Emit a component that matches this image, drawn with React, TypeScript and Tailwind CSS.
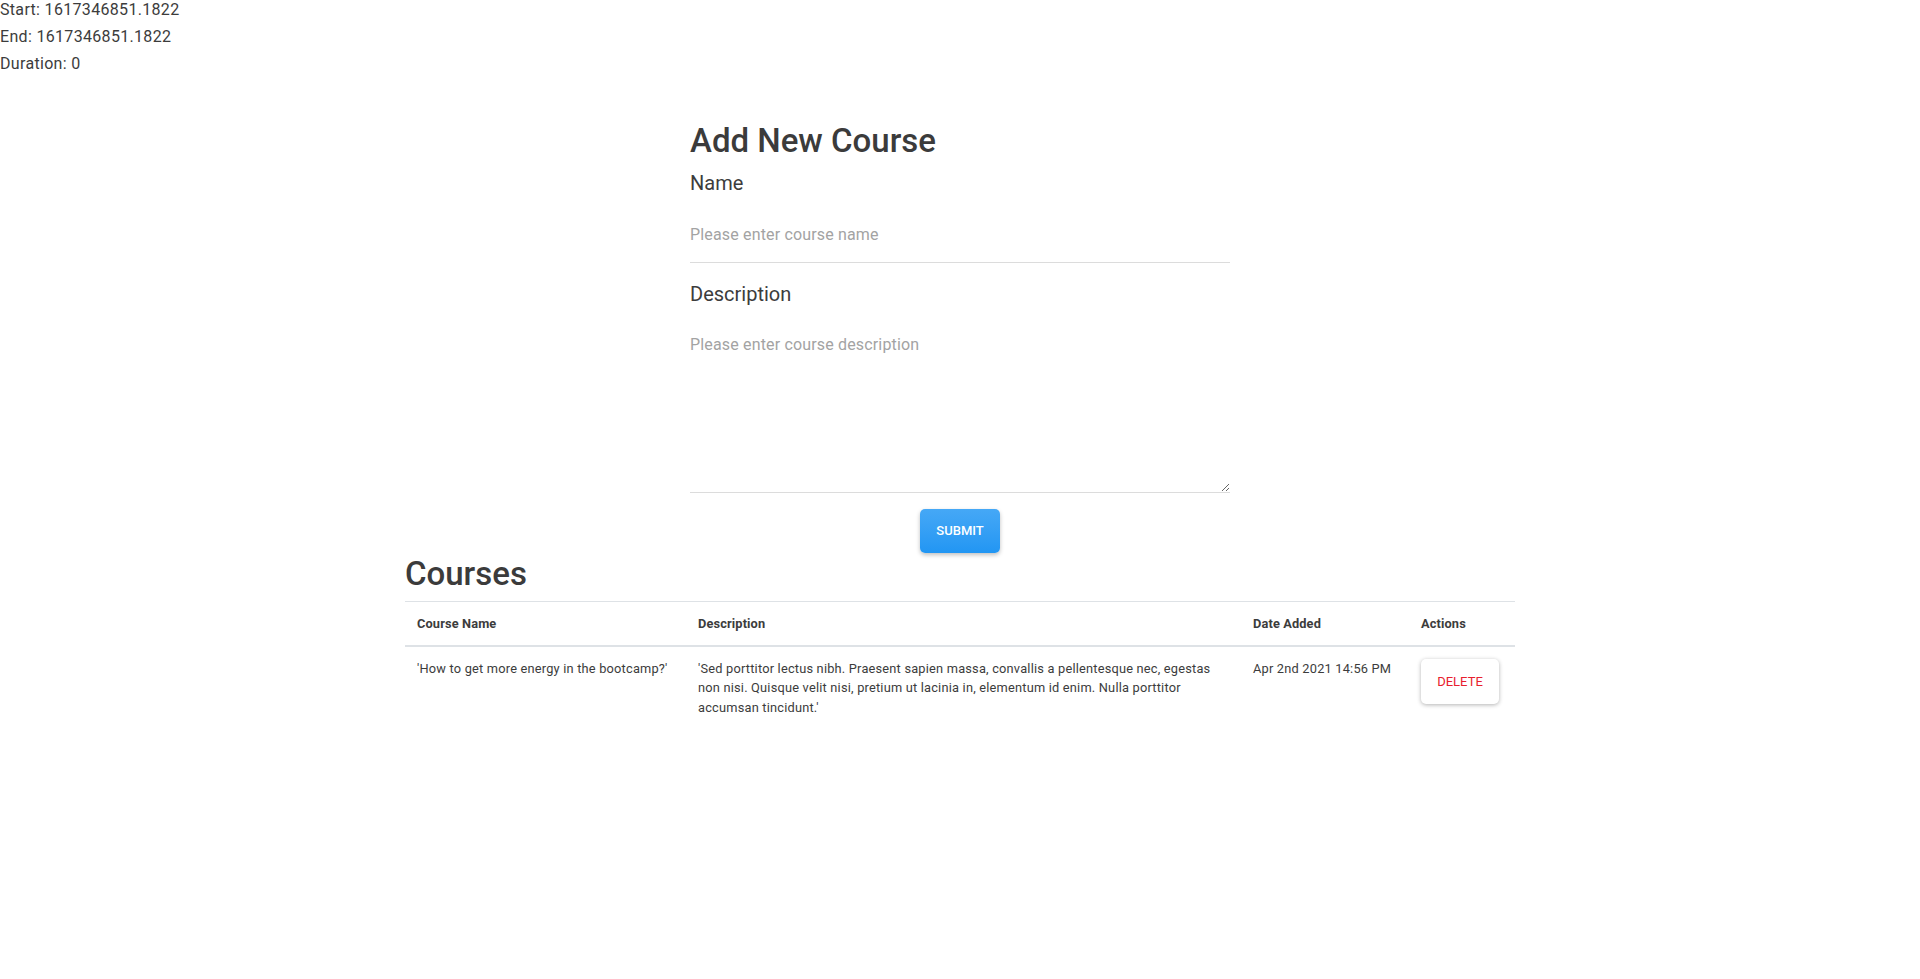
import React, { useState } from "react";

interface Course {
  name: string;
  description: string;
  dateAdded: string;
}

const initialCourses: Course[] = [
  {
    name: "'How to get more energy in the bootcamp?'",
    description:
      "'Sed porttitor lectus nibh. Praesent sapien massa, convallis a pellentesque nec, egestas non nisi. Quisque velit nisi, pretium ut lacinia in, elementum id enim. Nulla porttitor accumsan tincidunt.'",
    dateAdded: "Apr 2nd 2021 14:56 PM",
  },
];

export default function App() {
  const [name, setName] = useState("");
  const [description, setDescription] = useState("");
  const [courses, setCourses] = useState<Course[]>(initialCourses);

  return (
    <div className="min-h-screen bg-white text-[#3c3c3c] font-['Roboto',sans-serif]">
      {/* Timing info */}
      <div className="text-[16px] leading-[19px] tracking-[0.02em]">
        <div className="mb-2">Start: 1617346851.1822</div>
        <div className="mb-2">End: 1617346851.1822</div>
        <div>Duration: 0</div>
      </div>

      {/* Add course form */}
      <div className="mx-auto mt-[48px] w-[540px]">
        <h1 className="text-[33px] leading-[40px] font-medium text-[#3b3b3b]">Add New Course</h1>
        <label className="mt-[10px] block text-[20px] leading-[24px] text-[#3c3c3c]">Name</label>
        <input
          value={name}
          onChange={(e) => setName(e.target.value)}
          placeholder="Please enter course name"
          className="block w-full border-b border-[#dcdcdc] pt-[30px] pb-[18px] text-[16px] leading-[19px] tracking-[0.01em] outline-none placeholder:text-[#a3a3a3]"
        />
        <label className="mt-[19px] block text-[20px] leading-[24px] text-[#3c3c3c]">Description</label>
        <textarea
          value={description}
          onChange={(e) => setDescription(e.target.value)}
          placeholder="Please enter course description"
          className="block h-[187px] w-full border-b border-[#dcdcdc] pt-[29px] text-[16px] leading-[19px] tracking-[0.01em] outline-none placeholder:text-[#a3a3a3]"
        />
        <div className="mt-[16px] flex justify-center">
          <button className="h-[44px] w-[80px] rounded-[5px] bg-gradient-to-b from-[#45a8f6] to-[#2196f3] text-[13px] font-medium text-white uppercase shadow-[0_2px_4px_rgba(0,0,0,0.25)]">
            Submit
          </button>
        </div>
      </div>

      {/* Courses table */}
      <div className="mx-auto mt-[1px] w-[1110px]">
        <h2 className="text-[33px] leading-[40px] font-medium text-[#3b3b3b]">Courses</h2>
        <table className="mt-[7px] w-full table-fixed border-collapse text-[12.8px] leading-[19.2px]">
          <thead>
            <tr>
              <th className="w-[281px] border-t border-b-2 border-[#dee2e6] p-3 text-left font-bold tracking-[0.01em]">Course Name</th>
              <th className="w-[555px] border-t border-b-2 border-[#dee2e6] p-3 text-left font-bold tracking-[0.01em]">Description</th>
              <th className="w-[168px] border-t border-b-2 border-[#dee2e6] p-3 text-left font-bold tracking-[0.01em]">Date Added</th>
              <th className="w-[106px] border-t border-b-2 border-[#dee2e6] p-3 text-left font-bold tracking-[0.01em]">Actions</th>
            </tr>
          </thead>
          <tbody className="tracking-[0.016em]">
            {courses.map((c, i) => (
              <tr key={i}>
                <td className="p-3 align-top">{c.name}</td>
                <td className="p-3 align-top">{c.description}</td>
                <td className="p-3 align-top">{c.dateAdded}</td>
                <td className="p-3 align-top">
                  <button
                    onClick={() => setCourses(courses.filter((_, j) => j !== i))}
                    className="h-[45px] w-[78px] rounded-[5px] bg-white text-[13px] uppercase tracking-normal text-[#e8202e] shadow-[0_1px_4px_rgba(0,0,0,0.3)]"
                  >
                    Delete
                  </button>
                </td>
              </tr>
            ))}
          </tbody>
        </table>
      </div>
    </div>
  );
}
